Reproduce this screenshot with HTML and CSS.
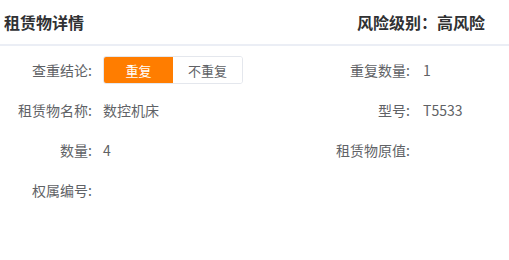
FILE: index.html
```html
<!DOCTYPE html>
<html lang="zh-CN">
  <head>
    <meta charset="utf-8">
    <title>租赁物详情</title>
    <link rel="stylesheet" href="styles.css">
  </head>
  <body>

    <!-- Header -->
    <div class="header">
      <span class="title">租赁物详情</span>
      <span class="risk">风险级别：高风险</span>
    </div>

    <!-- Detail form -->
    <div class="detail">
      <div class="item left">
        <span class="label">查重结论:</span>
        <div class="btn-group">
          <span class="btn active">重复</span>
          <span class="btn">不重复</span>
        </div>
      </div>
      <div class="item right">
        <span class="label">重复数量:</span>
        <span class="value">1</span>
      </div>

      <div class="item left">
        <span class="label">租赁物名称:</span>
        <span class="value">数控机床</span>
      </div>
      <div class="item right">
        <span class="label">型号:</span>
        <span class="value">T5533</span>
      </div>

      <div class="item left">
        <span class="label">数量:</span>
        <span class="value">4</span>
      </div>
      <div class="item right">
        <span class="label">租赁物原值:</span>
        <span class="value"></span>
      </div>

      <div class="item left">
        <span class="label">权属编号:</span>
        <span class="value"></span>
      </div>
      <div class="item right"></div>
    </div>

  </body>
</html>
```

FILE: styles.css
```css
body {
  margin: 0;
  font-family: "Noto Sans CJK SC", "Noto Sans", sans-serif;
  color: #606266;
  background: #fff;
}

/* Header bar */
.header {
  height: 44px;
  display: flex;
  align-items: center;
  justify-content: space-between;
  padding: 0 24px 0 4px;
  border-bottom: 2px solid #ebeef5;
}

.header .title,
.header .risk {
  font-size: 16px;
  font-weight: bold;
  color: #303133;
}

/* Detail rows */
.detail {
  display: grid;
  grid-template-columns: 254px 1fr;
  row-gap: 12px;
  padding-top: 10px;
}

.item {
  display: flex;
  align-items: center;
  height: 28px;
  font-size: 14px;
}

.item .label {
  text-align: right;
  flex-shrink: 0;
}

.left .label {
  width: 92px;
  margin-right: 11px;
}

.right .label {
  width: 156px;
  margin-right: 13px;
}

/* Toggle buttons */
.btn-group {
  display: flex;
  height: 28px;
  border: 1px solid #e4e7ed;
  border-radius: 3px;
  overflow: hidden;
  box-sizing: border-box;
}

.btn {
  width: 69px;
  display: flex;
  align-items: center;
  justify-content: center;
  font-size: 13px;
  color: #606266;
  background: #fff;
}

.btn.active {
  background: #ff7d00;
  color: #fff;
}
```
